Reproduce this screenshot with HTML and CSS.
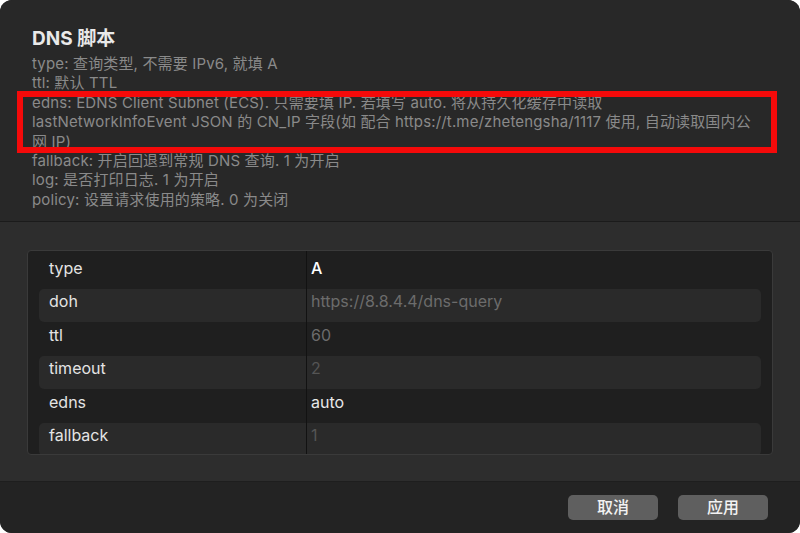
FILE: index.html
```html
<!DOCTYPE html>
<html lang="zh-CN">
<head>
<meta charset="utf-8">
<title>DNS 脚本</title>
<link rel="stylesheet" href="styles.css">
</head>
<body>
<div class="window">
  <header class="head">
    <h1 class="title">DNS 脚本</h1>
    <div class="desc">
      <p>type: 查询类型, 不需要 IPv6, 就填 A</p>
      <p>ttl: 默认 TTL</p>
      <p>edns: EDNS Client Subnet (ECS). 只需要填 IP. 若填写 auto. 将从持久化缓存中读取</p>
      <p>lastNetworkInfoEvent JSON 的 CN_IP 字段(如 配合 https://t.me/zhetengsha/1117 使用, 自动读取国内公网 IP)</p>
      <p>fallback: 开启回退到常规 DNS 查询. 1 为开启</p>
      <p>log: 是否打印日志. 1 为开启</p>
      <p>policy: 设置请求使用的策略. 0 为关闭</p>
    </div>
    <div class="mark"></div>
  </header>

  <main class="body">
    <div class="table">
      <div class="row"><span class="key">type</span><span class="val strong">A</span></div>
      <div class="row alt"><span class="key">doh</span><span class="val ph">https://8.8.4.4/dns-query</span></div>
      <div class="row"><span class="key">ttl</span><span class="val ph">60</span></div>
      <div class="row alt"><span class="key">timeout</span><span class="val ph dim">2</span></div>
      <div class="row"><span class="key">edns</span><span class="val">auto</span></div>
      <div class="row alt"><span class="key">fallback</span><span class="val ph dim">1</span></div>
    </div>
  </main>

  <footer class="foot">
    <button class="btn">取消</button>
    <button class="btn">应用</button>
  </footer>
</div>
</body>
</html>
```

FILE: styles.css
```css
* { box-sizing: border-box; }

html, body {
  margin: 0;
  background: #ffffff;
}

body {
  font-family: "Inter", "Noto Sans CJK SC", sans-serif;
}

.window {
  width: 800px;
  height: 533px;
  border-radius: 12px;
  overflow: hidden;
  display: flex;
  flex-direction: column;
  background: #282828;
}

/* ---- header with description ---- */
.head {
  position: relative;
  height: 222px;
  padding: 27px 32px 0;
  background: #282828;
  border-bottom: 1px solid #1b1b1b;
}

.title {
  margin: 0;
  font-size: 19px;
  line-height: 23px;
  font-weight: 700;
  color: #e9e9e9;
}

.desc {
  margin-top: 4px;
  width: 730px;
  font-size: 15px;
  line-height: 19.4px;
  letter-spacing: 0.15px;
  color: #8a8a8a;
}

.desc p { margin: 0; }

.mark {
  position: absolute;
  left: 17px;
  top: 91px;
  width: 760px;
  height: 62px;
  border: 6px solid #f50a0a;
}

/* ---- parameter table ---- */
.body {
  height: 259px;
  padding: 28px 27px 0;
  background: #2d2d2d;
}

.table {
  position: relative;
  height: 205px;
  overflow: hidden;
  padding: 4px 11px 0;
  background: #1f1f1f;
  border: 1px solid #3a3a3a;
  border-radius: 4px;
}

.table::before {
  content: "";
  position: absolute;
  left: 278px;
  top: 0;
  bottom: 0;
  width: 1px;
  background: #121212;
}

.row {
  display: grid;
  grid-template-columns: 267px 1fr;
  align-items: center;
  height: 33.5px;
  padding-bottom: 8px;
  border-radius: 5px;
  font-size: 16px;
  line-height: 20px;
}

.row.alt { background: #2a2a2a; }

.key {
  padding-left: 10px;
  color: #e4e4e4;
}

.val {
  padding-left: 5px;
  color: #e8e8e8;
}

.val.strong {
  color: #ffffff;
  font-weight: 500;
}

.val.ph { color: #6c6c6c; }
.val.dim { color: #555555; }

/* ---- footer buttons ---- */
.foot {
  flex: 1;
  display: flex;
  justify-content: flex-end;
  align-items: flex-start;
  gap: 20px;
  padding: 13px 32px 0;
  background: #232323;
  border-top: 1px solid #1e1e1e;
}

.btn {
  width: 90px;
  height: 25px;
  padding: 0;
  border: none;
  border-radius: 5px;
  background: #5f5f5f;
  color: #f2f2f2;
  font-family: "Inter", "Noto Sans CJK SC", sans-serif;
  font-size: 16px;
  line-height: 25px;
  font-weight: 500;
}
```
